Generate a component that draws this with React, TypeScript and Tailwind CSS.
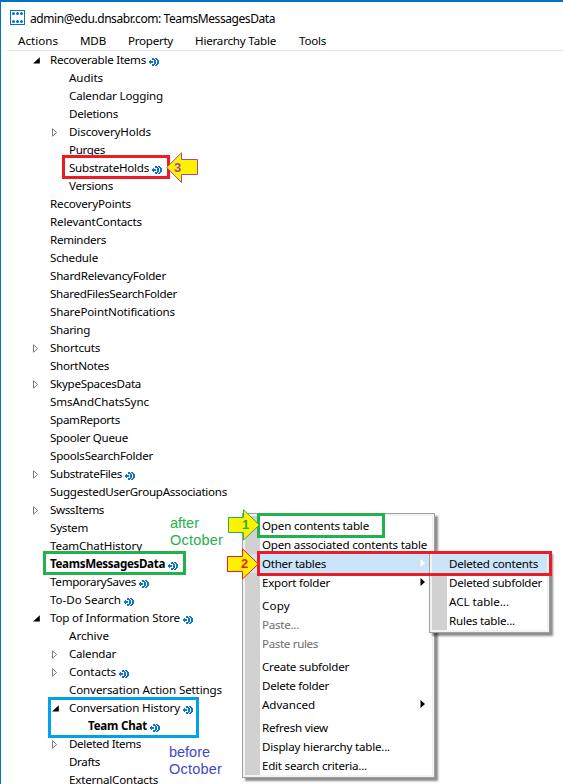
import { useLayoutEffect, useRef } from 'react';

type Node = { t: string; d: 0 | 1 | 2; w: number; a?: 'open' | 'closed'; link?: boolean; bold?: boolean };

const nodes: Node[] = [
  { t: 'Recoverable Items', d: 0, w: 96, a: 'open', link: true },
  { t: 'Audits', d: 1, w: 34 },
  { t: 'Calendar Logging', d: 1, w: 94 },
  { t: 'Deletions', d: 1, w: 49 },
  { t: 'DiscoveryHolds', d: 1, w: 82, a: 'closed' },
  { t: 'Purges', d: 1, w: 36 },
  { t: 'SubstrateHolds', d: 1, w: 80, link: true },
  { t: 'Versions', d: 1, w: 44 },
  { t: 'RecoveryPoints', d: 0, w: 81 },
  { t: 'RelevantContacts', d: 0, w: 92 },
  { t: 'Reminders', d: 0, w: 56 },
  { t: 'Schedule', d: 0, w: 48 },
  { t: 'ShardRelevancyFolder', d: 0, w: 116 },
  { t: 'SharedFilesSearchFolder', d: 0, w: 127 },
  { t: 'SharePointNotifications', d: 0, w: 125 },
  { t: 'Sharing', d: 0, w: 40 },
  { t: 'Shortcuts', d: 0, w: 50, a: 'closed' },
  { t: 'ShortNotes', d: 0, w: 59 },
  { t: 'SkypeSpacesData', d: 0, w: 91, a: 'closed' },
  { t: 'SmsAndChatsSync', d: 0, w: 99 },
  { t: 'SpamReports', d: 0, w: 70 },
  { t: 'Spooler Queue', d: 0, w: 78 },
  { t: 'SpoolsSearchFolder', d: 0, w: 103 },
  { t: 'SubstrateFiles', d: 0, w: 72, a: 'closed', link: true },
  { t: 'SuggestedUserGroupAssociations', d: 0, w: 177 },
  { t: 'SwssItems', d: 0, w: 54, a: 'closed' },
  { t: 'System', d: 0, w: 38 },
  { t: 'TeamChatHistory', d: 0, w: 92 },
  { t: 'TeamsMessagesData', d: 0, w: 115, link: true, bold: true },
  { t: 'TemporarySaves', d: 0, w: 86, link: true },
  { t: 'To-Do Search', d: 0, w: 71, link: true },
  { t: 'Top of Information Store', d: 0, w: 130, a: 'open', link: true },
  { t: 'Archive', d: 1, w: 40 },
  { t: 'Calendar', d: 1, w: 47, a: 'closed' },
  { t: 'Contacts', d: 1, w: 47, a: 'closed', link: true },
  { t: 'Conversation Action Settings', d: 1, w: 153 },
  { t: 'Conversation History', d: 1, w: 111, a: 'open', link: true },
  { t: 'Team Chat', d: 2, w: 59, link: true, bold: true },
  { t: 'Deleted Items', d: 1, w: 72, a: 'closed' },
  { t: 'Drafts', d: 1, w: 31 },
  { t: 'ExternalContacts', d: 1, w: 89 },
];

const indent = { 0: 'pl-[31px]', 1: 'pl-[50px]', 2: 'pl-[69px]' };

/** Text tracked so that it fills the given width. */
function Label({ text, width, className = '' }: { text: string; width: number; className?: string }) {
  const ref = useRef<HTMLSpanElement>(null);
  useLayoutEffect(() => {
    const el = ref.current;
    if (!el) return;
    const fit = () => {
      el.style.letterSpacing = '0px';
      const natural = el.getBoundingClientRect().width;
      el.style.letterSpacing = `${(width - natural) / text.length}px`;
    };
    fit();
    document.fonts.ready.then(fit);
  }, [text, width]);
  return (
    <span ref={ref} className={`inline-block shrink-0 whitespace-pre ${className}`}>
      {text}
    </span>
  );
}

const linkPixels = [
  '...XX.XX..',
  '...XXX.XX.',
  '.X...XX.XX',
  'XXXX.XX.XX',
  'XXXX.XX.XX',
  '.X...XX.XX',
  '...XXX.XX.',
  '...XX.XX..',
];

function LinkIcon() {
  return (
    <svg width="10" height="8" viewBox="0 0 10 8" className="mt-[3px] ml-[3px] shrink-0" shapeRendering="crispEdges" fill="#0f73c6">
      {linkPixels.map((row, y) =>
        [...row].map((c, x) => (c === 'X' ? <rect key={`${x}-${y}`} x={x} y={y} width="1" height="1" /> : null)),
      )}
    </svg>
  );
}

function Toggle({ kind }: { kind?: 'open' | 'closed' }) {
  return (
    <span className="flex h-[18px] w-[13px] shrink-0 items-center">
      {kind === 'open' && (
        <svg width="7" height="7" viewBox="0 0 7 7" className="ml-px">
          <path d="M6.8 0.2v6.3H0z" fill="#000" />
        </svg>
      )}
      {kind === 'closed' && (
        <svg width="7" height="9" viewBox="0 0 7 9" className="ml-px">
          <path d="M0.5 0.8v7.4l4.2-3.7z" fill="#fff" stroke="#7c7c7c" />
        </svg>
      )}
    </span>
  );
}

type Item = { t: string; w: number; sub?: boolean; off?: boolean; hot?: boolean };

const groups: Item[][] = [
  [
    { t: 'Open contents table', w: 107 },
    { t: 'Open associated contents table', w: 165 },
    { t: 'Other tables', w: 64, sub: true, hot: true },
    { t: 'Export folder', w: 68, sub: true },
  ],
  [
    { t: 'Copy', w: 28 },
    { t: 'Paste...', w: 37, off: true },
    { t: 'Paste rules', w: 56, off: true },
  ],
  [
    { t: 'Create subfolder', w: 87 },
    { t: 'Delete folder', w: 67 },
    { t: 'Advanced', w: 53, sub: true },
  ],
  [
    { t: 'Refresh view', w: 66 },
    { t: 'Display hierarchy table...', w: 128 },
    { t: 'Edit search criteria...', w: 105 },
  ],
];

const subItems: Item[] = [
  { t: 'Deleted contents', w: 89, hot: true },
  { t: 'Deleted subfolder', w: 93 },
  { t: 'ACL table...', w: 60 },
  { t: 'Rules table...', w: 66 },
];

function MenuRow({ item }: { item: Item }) {
  return (
    <div className={`flex h-[19px] items-center pl-[17px] ${item.hot ? 'bg-[#cce4f7]' : ''} ${item.off ? 'text-[#6d6d6d]' : ''}`}>
      <Label text={item.t} width={item.w} />
      {item.sub && (
        <svg width="5" height="8" viewBox="0 0 5 8" className="mr-[7px] mb-[2px] ml-auto">
          <path d="M0.5 0v8l4.5-4z" fill={item.hot ? '#fff' : '#000'} />
        </svg>
      )}
    </div>
  );
}

const shell = 'absolute border border-[#a0a0a0] shadow-[3px_3px_2px_rgba(0,0,0,0.45)] bg-[#f2f2f2] p-[2px]';
const sheet = 'h-full bg-[linear-gradient(to_right,#d1d1d1_15px,#fff_15px)]';

function Arrow({ n, color, className, left }: { n: string; color: string; className: string; left?: boolean }) {
  return (
    <div className={`absolute h-[32px] w-[32px] ${className}`}>
      <svg width="32" height="32" viewBox="0 0 32 32" className="block">
        <path
          d={left ? 'M0.7 15.5L15.5 0.8V7.5H31.5V22.5H15.5V30.5z' : 'M31.3 16L15.5 0.8V8.5H0.5V23.5H15.5V31z'}
          fill="#fff200"
          stroke={color}
        />
      </svg>
      <span
        className={`absolute top-[8px] font-['Liberation_Sans',sans-serif] text-[13px] leading-[16px] font-bold ${left ? 'left-[8px]' : 'left-[14px]'}`}
        style={{ color }}
      >
        {n}
      </span>
    </div>
  );
}

export default function App() {
  return (
    <div className="relative h-[784px] w-[563px] overflow-hidden border-t-2 border-l border-[#0173c7] bg-white font-['Noto_Sans','Open_Sans',sans-serif] text-[11.6px] leading-[18px] text-black">
      <header className="flex h-[30px] items-center pl-[9px]">
        <svg width="15" height="15" viewBox="0 0 15 15" className="mt-px">
          <rect x="0.5" y="0.5" width="14" height="14" fill="#fff" stroke="#0173c7" />
          <g fill="#0173c7">
            {[3.5, 7.5, 11.5].map((x) => [3.5, 11.5].map((y) => <circle key={`${x}-${y}`} cx={x} cy={y} r="1.5" />))}
          </g>
        </svg>
        <Label text="admin@edu.dnsabr.com: TeamsMessagesData" width={245} className="mt-[4px] ml-[5px] text-[12px]" />
      </header>
      <nav className="ml-[6px] flex h-[19px] items-center border-b border-[#e3e3e3] pl-[11px]">
        <Label text="Actions" width={40} />
        <Label text="MDB" width={26} className="ml-[22px]" />
        <Label text="Property" width={45} className="ml-[22px]" />
        <Label text="Hierarchy Table" width={81} className="ml-[22px]" />
        <Label text="Tools" width={27} className="ml-[23px]" />
      </nav>
      <ul>
        {nodes.map((n) => (
          <li key={n.t} className={`flex h-[18px] items-center ${indent[n.d]} ${n.bold ? 'font-bold' : ''}`}>
            <Toggle kind={n.a} />
            <Label text={n.t} width={n.w} className="ml-[5px]" />
            {n.link && <LinkIcon />}
          </li>
        ))}
      </ul>

      <div className={`${shell} top-[511px] left-[241px] h-[265px] w-[193px]`}>
        <div className={sheet}>
          {groups.map((g, i) => (
            <div key={i} className={i ? 'mt-[4px]' : ''}>
              {g.map((it) => (
                <MenuRow key={it.t} item={it} />
              ))}
            </div>
          ))}
        </div>
      </div>
      <div className={`${shell} top-[549px] left-[428px] h-[82px] w-[121px]`}>
        <div className={sheet}>
          {subItems.map((it) => (
            <MenuRow key={it.t} item={it} />
          ))}
        </div>
      </div>

      <div className="absolute top-[153px] left-[61px] h-[24px] w-[108px] border-3 border-[#ed1c24]" />
      <div className="absolute top-[549px] left-[42px] h-[24px] w-[143px] border-3 border-[#22b14c]" />
      <div className="absolute top-[695px] left-[47px] h-[41px] w-[151px] border-3 border-[#00a2e8]" />
      <div className="absolute top-[511px] left-[256px] h-[25px] w-[128px] border-3 border-[#22b14c]" />
      <div className="absolute top-[549px] left-[256px] h-[25px] w-[295px] border-3 border-[#ed1c24]" />

      <Arrow n="3" color="#a349a4" left className="top-[150px] left-[165px]" />
      <Arrow n="1" color="#22b14c" className="top-[507px] left-[227px]" />
      <Arrow n="2" color="#ed1c24" className="top-[546px] left-[226px]" />

      <div className="absolute top-[513px] left-[169px] flex flex-col items-start font-['Liberation_Sans',sans-serif] text-[14.5px] leading-[17px] text-[#22b14c]">
        <Label text="after" width={29} />
        <Label text="October" width={53} />
      </div>
      <div className="absolute top-[742px] left-[168px] flex flex-col items-start font-['Liberation_Sans',sans-serif] text-[14.5px] leading-[17px] text-[#3f48cc]">
        <Label text="before" width={41} />
        <Label text="October" width={53} />
      </div>
    </div>
  );
}
